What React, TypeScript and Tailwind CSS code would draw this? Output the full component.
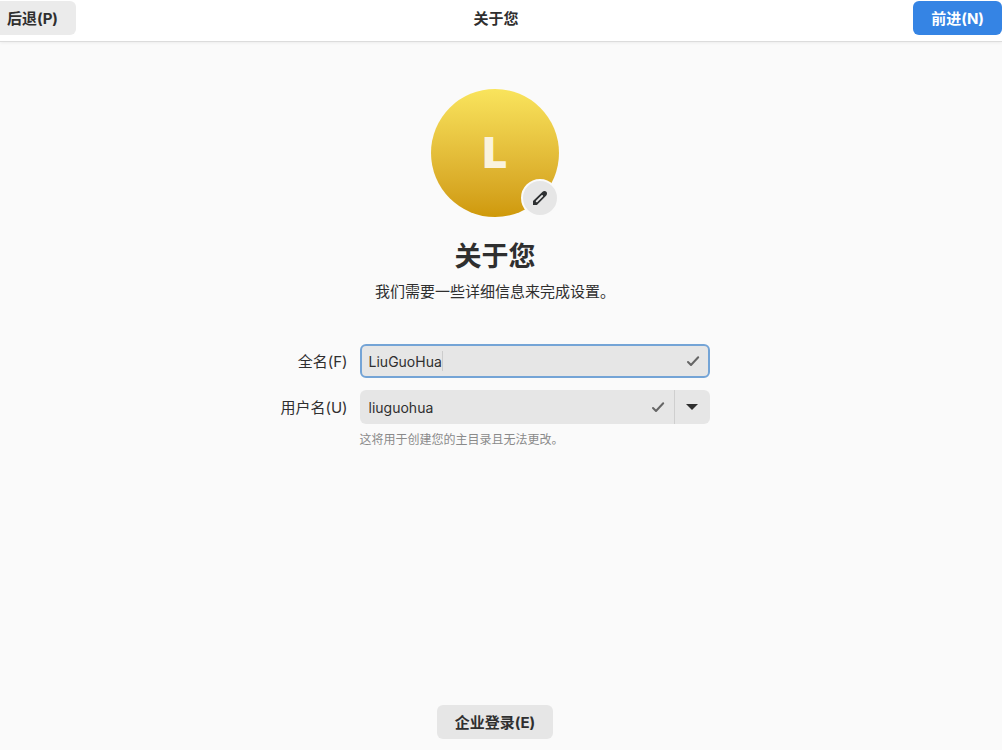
import { useState } from "react";

function CheckIcon() {
  return (
    <svg viewBox="0 0 16 16" className="h-4 w-4" fill="none" stroke="#666666" strokeWidth="2" strokeLinecap="round" strokeLinejoin="round" aria-hidden="true">
      <path d="M3 9 6 12 13.2 4.2" />
    </svg>
  );
}

function PencilIcon() {
  return (
    <svg viewBox="0 0 16 16" className="h-4 w-4" aria-hidden="true">
      <path
        fillRule="evenodd"
        fill="#2e3032"
        d="M10.6 1.7a2.5 2.5 0 0 1 1.8-.7 2.6 2.6 0 0 1 2.6 2.6 2.5 2.5 0 0 1-.7 1.8L4.9 15H1V11.1ZM9.5 5.2 4 10.7a1 1 0 0 0 1.4 1.4L10.9 6.600a1 1 0 0 0-1.4-1.4Z"
      />
    </svg>
  );
}

export default function App() {
  const [fullName, setFullName] = useState("LiuGuoHua");
  const [userName, setUserName] = useState("liuguohua");

  return (
    <div className="flex min-h-screen flex-col bg-[#fafafa] font-[family-name:Inter,'Noto_Sans_CJK_SC',sans-serif] text-[15px] leading-5 text-[#2f2f2f]">
      <header className="grid grid-cols-[1fr_auto_1fr] items-start border-b border-[#dcdcdc] bg-white pt-px pb-1.5 shadow-[0_1px_3px_rgba(0,0,0,0.06)]">
        <button type="button" className="h-[34px] justify-self-start rounded-r-md bg-[#ebebeb] pt-0.5 pr-[18px] pl-[7px] font-bold">
          后退(P)
        </button>
        <h1 className="mr-2.5 self-center pt-0.5 font-bold">关于您</h1>
        <button type="button" className="h-[34px] justify-self-end rounded-md bg-[#3584e4] px-[18px] pt-0.5 font-bold text-white">
          前进(N)
        </button>
      </header>

      <main className="flex flex-1 flex-col items-center pt-[47px] pr-3 pb-[11px]">
        <div className="relative">
          <div className="flex h-32 w-32 items-center justify-center rounded-full bg-linear-to-b from-[#f9e45c] to-[#cf9908] pb-0.5 text-[43px] leading-none font-black text-[#faf3de]">
            L
          </div>
          <button
            type="button"
            aria-label="编辑头像"
            className="absolute right-0 bottom-0 flex h-[38px] w-[38px] items-center justify-center rounded-full border-2 border-[#fafafa] bg-[#e6e6e6]"
          >
            <PencilIcon />
          </button>
        </div>

        <h2 className="mt-[22px] text-[27px] leading-9 font-bold">关于您</h2>
        <p className="mt-[7px]">我们需要一些详细信息来完成设置。</p>

        <form className="mt-[42px] grid grid-cols-[auto_350px] items-center gap-x-3 gap-y-3" onSubmit={(e) => e.preventDefault()}>
          <label htmlFor="full-name" className="pt-0.5 text-right">
            全名(F)
          </label>
          <div className="flex h-[34px] items-center rounded-md border-2 border-[#74a4d6] bg-[#e6e6e6] px-[7px]">
            <input
              id="full-name"
              value={fullName}
              onChange={(e) => setFullName(e.target.value)}
              className="field-sizing-content max-w-[300px] bg-transparent pt-0.5 text-sm outline-none"
            />
            <span className="h-5 w-px bg-[#cccccc]" />
            <span className="ml-auto">
              <CheckIcon />
            </span>
          </div>

          <label htmlFor="user-name" className="pt-0.5 text-right">
            用户名(U)
          </label>
          <div className="flex h-[34px] overflow-hidden rounded-md bg-[#e6e6e6]">
            <div className="flex min-w-0 flex-1 items-center pr-2 pl-[9px]">
              <input
                id="user-name"
                value={userName}
                onChange={(e) => setUserName(e.target.value)}
                className="min-w-0 flex-1 bg-transparent pt-0.5 text-sm outline-none"
              />
              <CheckIcon />
            </div>
            <button type="button" aria-label="选择用户名" className="flex w-9 items-center justify-center border-l border-[#cfcfcf]">
              <svg viewBox="0 0 12 6" className="h-1.5 w-3" aria-hidden="true">
                <path d="M0 0h12L6 6Z" fill="#2e2e2e" />
              </svg>
            </button>
          </div>

          <p className="col-start-2 -mt-[5px] text-xs leading-[18px] text-[#8a8a8a]">这将用于创建您的主目录且无法更改。</p>
        </form>

        <button type="button" className="mt-auto h-[34px] rounded-md bg-[#e6e6e6] px-[18px] pt-0.5 font-bold">
          企业登录(E)
        </button>
      </main>
    </div>
  );
}
